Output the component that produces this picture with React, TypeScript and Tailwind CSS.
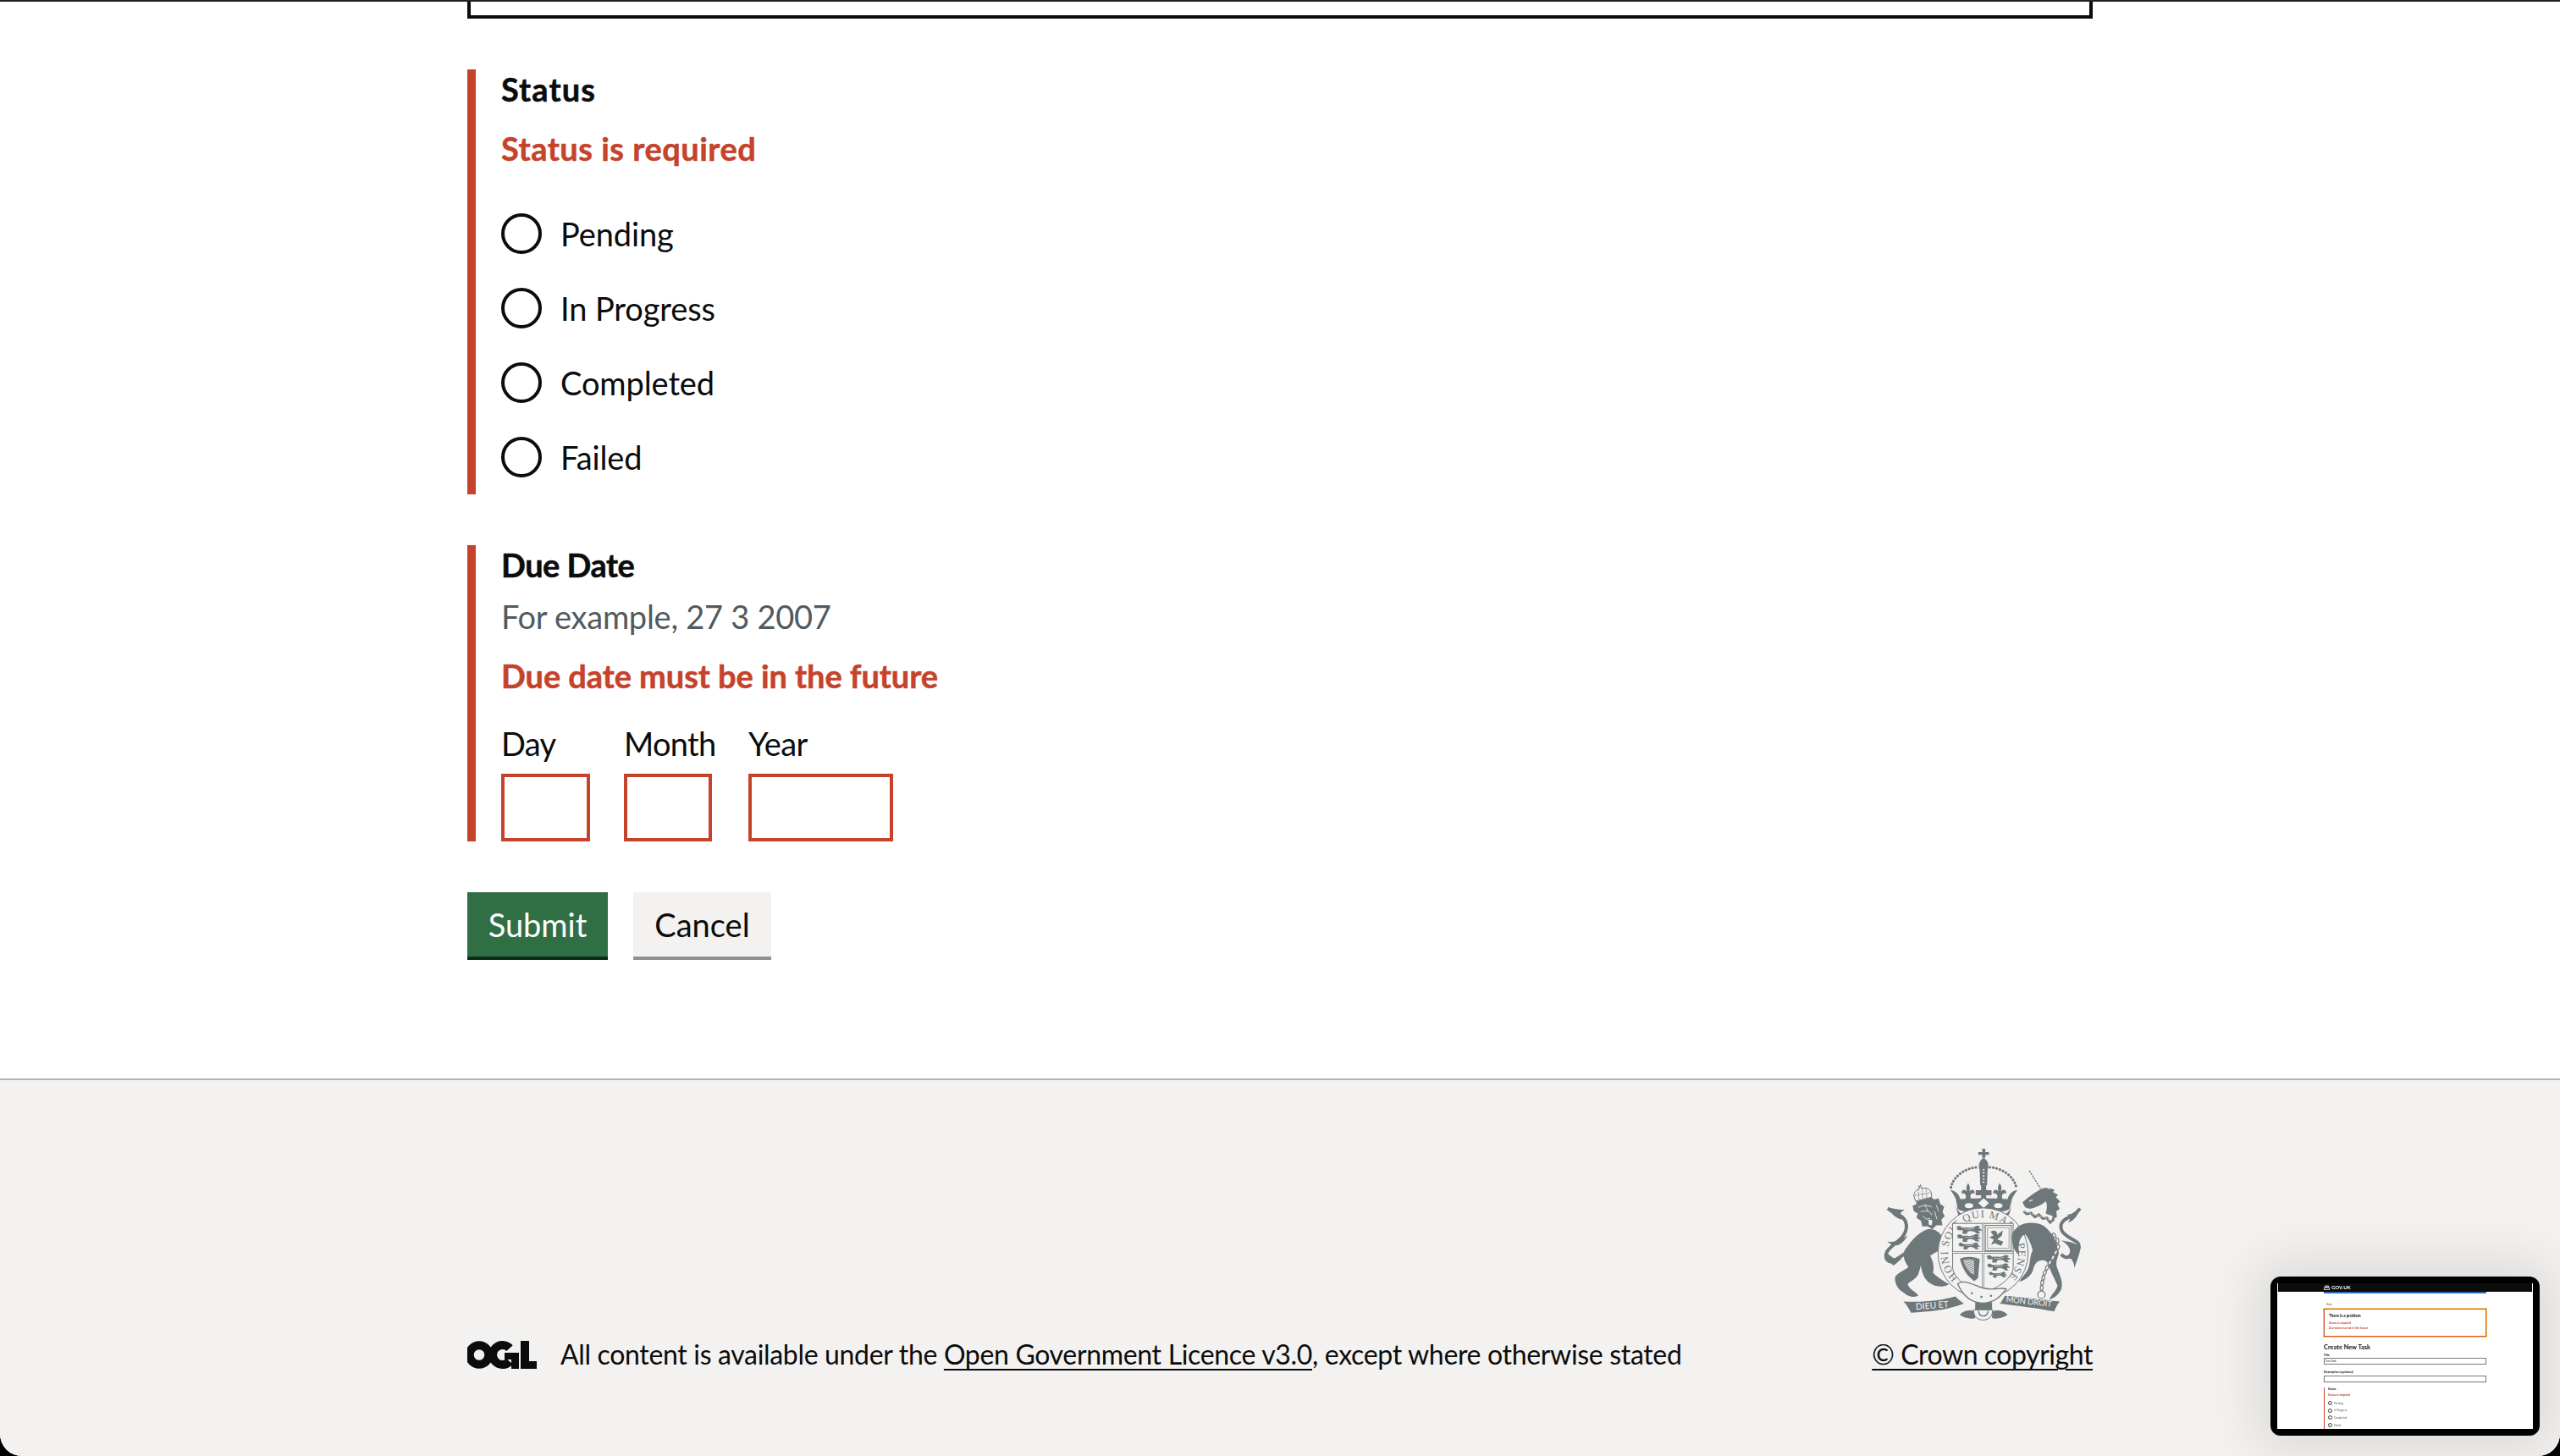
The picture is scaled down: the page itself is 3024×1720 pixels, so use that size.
const STATUS_OPTIONS = ["Pending", "In Progress", "Completed", "Failed"];

function OglLogo() {
  return (
    <svg width="82" height="33" viewBox="0 0 82 33" className="shrink-0" role="img" aria-label="Open Government Licence logo">
      <circle cx="14" cy="16.5" r="11.3" fill="none" stroke="#0b0c0c" strokeWidth="10" />
      <path d="M50,8.7 A11.5,11.5 0 1 0 50,24.3" fill="none" stroke="#0b0c0c" strokeWidth="10" />
      <path d="M44,14 H61 V33 H52 V22 H44 Z" fill="#0b0c0c" />
      <path d="M63,0 H73 V24 H82 V33 H63 Z" fill="#0b0c0c" />
    </svg>
  );
}

function MiniLion({ x, y, s = 1 }: { x: number; y: number; s?: number }) {
  return (
    <g transform={`translate(${x} ${y}) scale(${s})`}>
      <path d="M0,7 C4,1 12,0 16,5 C20,9 28,6 38,7 C46,8 54,6 60,3 C66,0 72,2 76,5 L70,9 C76,10 80,13 81,18 L72,16 C70,20 74,24 78,26 L64,26 C60,20 52,17 42,18 C34,19 32,24 36,27 L20,27 C18,22 22,17 20,14 C14,17 6,16 0,12 L6,10 Z" fill="#6e777a" />
      <path d="M26,11 C36,13 48,13 58,9" stroke="#f3f2f1" strokeWidth="1.6" fill="none" />
    </g>
  );
}

function fleur(cx: number, t: number) {
  return `M${cx},${t} C${cx + 7},${t + 12} ${cx + 8},${t + 20} ${cx + 4},${t + 30} C${cx + 12},${t + 20} ${cx + 25},${t + 22} ${cx + 23},${t + 38} C${cx + 18},${t + 33} ${cx + 12},${t + 36} ${cx + 8},${t + 44} L${cx + 10},${t + 66} H${cx - 10} L${cx - 8},${t + 44} C${cx - 12},${t + 36} ${cx - 18},${t + 33} ${cx - 23},${t + 38} C${cx - 25},${t + 22} ${cx - 12},${t + 20} ${cx - 4},${t + 30} C${cx - 8},${t + 20} ${cx - 7},${t + 12} ${cx},${t} Z`;
}

const CHAIN: [number, number, number][] = [
  [680, 358, 60],
  [692, 376, 80],
  [694, 398, 100],
  [686, 418, 115],
  [676, 436, 120],
  [665, 454, 120],
  [655, 472, 115],
  [647, 490, 110],
  [642, 508, 100],
  [638, 526, 95],
  [636, 544, 90],
];

function Crest() {
  const c = "#6e777a";
  const bg = "#f3f2f1";
  return (
    <svg width="233" height="207" viewBox="75 45 700 620" role="img" aria-label="Royal coat of arms">
      <defs>
        <path id="garterRing" d="M340,508 A125,125 0 1 1 516,508" fill="none" />
        <pattern id="harpHatch" width="5" height="5" patternUnits="userSpaceOnUse" patternTransform="rotate(70)">
          <rect width="2.2" height="5" fill={c} />
        </pattern>
      </defs>

      {/* lion tail */}
      <path d="M165,412 C125,440 95,465 85,440 C75,410 110,395 140,365 C165,335 160,300 130,285 C118,278 105,275 90,262" fill="none" stroke={c} strokeWidth="12" />
      <path d="M90,258 C110,262 128,268 150,266 C134,275 128,285 142,302 C120,298 105,285 90,258 Z M88,378 C105,385 125,378 160,358 C150,378 130,398 112,392 C102,390 94,386 88,378 Z M80,408 C90,440 100,462 112,464 C125,455 130,445 142,440 C110,445 95,430 80,408 Z" fill={c} />

      {/* lion */}
      <path d="M235,335 C200,345 175,375 150,410 C140,430 150,450 163,470 C150,482 125,490 116,505 C113,525 125,550 145,560 C165,578 185,578 198,572 C190,555 170,555 160,530 C170,520 195,510 200,490 L207,465 C212,500 225,525 255,535 C275,541 295,541 307,530 C285,520 265,505 250,490 C256,470 250,445 240,430 L270,412 L300,408 L340,408 C330,385 300,375 285,365 C275,350 265,335 235,335 Z" fill={c} />
      <path d="M178,252 L194,246 L206,232 L222,236 L240,222 L256,230 L270,226 L276,246 L290,256 L284,274 L292,290 L280,302 L284,322 L262,322 L248,336 L232,326 L212,326 L208,306 L192,296 L196,280 L182,272 Z" fill={c} />
      <path d="M198,258 L222,250 L246,256 M222,250 L232,272 M206,274 C214,270 222,272 232,272 C240,274 244,280 246,286 M214,288 L226,300 L240,298 M262,250 L270,272 M256,272 L264,300" stroke={bg} strokeWidth="2.5" fill="none" />
      <path d="M234,304 C238,300 246,302 248,308 L246,322 L236,320 Z" fill={bg} />
      <path d="M188,236 L182,215 C186,197 198,193 204,191 L198,182 L204,185 L206,178 L209,190 C226,188 240,192 244,206 L246,222 Z" fill={bg} stroke={c} strokeWidth="3" />
      <path d="M190,238 L246,222 L248,232 L192,248 Z" fill={c} />
      <path d="M186,216 L242,206 M198,196 L200,232 M212,192 L214,228 M226,192 L228,226" stroke={c} strokeWidth="4" strokeDasharray="3 4" fill="none" />

      {/* crown */}
      <path d="M425,50 H436 V62 H449 V72 H436 V82 H425 V72 H411 V62 H425 Z" fill={c} />
      <path d="M430,82 C446,90 450,110 444,126 L442,180 H418 L416,126 C410,110 414,90 430,82 Z" fill={c} />
      <path d="M430,122 V172" stroke={bg} strokeWidth="6" strokeDasharray="5 6" />
      <path d="M314,188 C322,148 365,118 408,116 M452,116 C495,118 538,148 546,188" fill="none" stroke={c} strokeWidth="9" strokeLinecap="round" strokeDasharray="1 11" />
      <path d={fleur(375, 172)} fill={c} />
      <path d={fleur(487, 172)} fill={c} />
      <path d="M421,178 H439 V197 H458 V215 H439 V240 H421 V215 H402 V197 H421 Z" fill={c} />
      <path d="M312,197 C330,198 346,212 350,240 L335,240 C332,225 322,210 312,197 Z M550,197 C532,198 516,212 512,240 L527,240 C530,225 540,210 550,197 Z" fill={c} />
      <path d="M332,232 C370,224 490,224 530,232 L522,264 C490,284 370,284 338,264 Z" fill={c} />
      <path d="M430,226 L449,243 L430,260 L411,243 Z" fill={bg} />
      <ellipse cx="378" cy="252" rx="15" ry="9" fill={bg} />
      <ellipse cx="482" cy="252" rx="15" ry="9" fill={bg} />
      <path d="M330,252 C340,275 350,280 356,283 L340,285 Z M530,252 C522,275 510,280 504,283 L520,285 Z" fill={c} />

      {/* garter ring */}
      <circle cx="428" cy="420" r="160" fill={bg} stroke={c} strokeWidth="3" />
      <text fontFamily="Liberation Serif, serif" fontSize="38" fill={c}>
        <textPath href="#garterRing" textLength="585">HONI SOIT QUI MAL Y PENSE</textPath>
      </text>

      {/* shield */}
      <path d="M320,315 H535 V470 C535,510 480,545 428,562 C375,545 320,510 320,470 Z" fill={bg} stroke={c} strokeWidth="3" />
      <path d="M428,315 V560 M320,418 H535" stroke={c} strokeWidth="7" />
      <path d="M428,315 V560 M320,418 H535" stroke={bg} strokeWidth="3" />
      <MiniLion x={333} y={322} s={1.12} />
      <MiniLion x={335} y={352} s={1.05} />
      <MiniLion x={340} y={382} s={0.95} />
      <MiniLion x={440} y={426} s={1.05} />
      <MiniLion x={442} y={456} s={1} />
      <MiniLion x={448} y={486} s={0.8} />
      <rect x="436" y="322" width="92" height="90" fill="none" stroke={c} strokeWidth="3" />
      <rect x="444" y="330" width="76" height="74" fill="none" stroke={c} strokeWidth="2" />
      <path d="M455,345 C468,335 480,345 478,355 L498,340 L495,358 L478,372 L500,380 L492,395 L470,385 L456,392 L466,372 L450,365 L465,358 Z" fill={c} />
      <path d="M346,440 C365,432 395,430 416,442 L410,510 L396,520 L380,505 C368,495 352,470 346,440 Z" fill={c} />
      <path d="M358,446 C372,442 385,442 396,446 L396,498 L384,490 C372,478 362,462 358,446 Z" fill={bg} />
      <path d="M358,446 C372,442 385,442 396,446 L396,498 L384,490 C372,478 362,462 358,446 Z" fill="url(#harpHatch)" />

      {/* unicorn tail */}
      <path d="M705,425 C730,450 760,425 768,398 C772,375 735,375 710,345 C698,325 705,305 730,295 C745,288 760,280 772,262" fill="none" stroke={c} strokeWidth="12" />
      <path d="M772,260 C760,275 745,282 724,284 C738,290 740,300 730,312 C750,305 765,288 772,260 Z M705,375 C725,380 750,378 775,400 C770,425 760,450 752,474 C752,452 742,438 725,432 C745,420 740,395 705,375 Z" fill={c} />

      {/* unicorn */}
      <path d="M592,128 L632,192" stroke={c} strokeWidth="4" strokeDasharray="7 3" />
      <path d="M568,240 C585,226 610,205 636,192 C652,186 664,190 672,204 L690,250 L682,292 L650,280 C656,262 656,244 650,236 C640,248 620,256 600,262 C590,264 582,262 576,256 Z" fill={c} />
      <path d="M664,190 L682,196 L676,204 L694,214 L686,222 L702,238 L692,246 L700,264 L688,272 L690,292 L672,304 C682,270 678,235 664,190 Z" fill={c} />
      <path d="M592,236 L604,232" stroke={bg} strokeWidth="3.5" fill="none" />
      <path d="M572,272 L584,282 L598,278 L612,292 L626,284 L640,298 L654,296 L666,312 L680,300" fill="none" stroke={c} strokeWidth="9" />
      <path d="M574,272 L640,293 L672,306" fill="none" stroke={bg} strokeWidth="2.5" strokeDasharray="5 5" />
      <path d="M552,326 C575,312 610,308 640,322 C668,340 692,378 697,420 C692,440 684,452 690,470 C702,505 712,520 706,548 C695,570 680,580 662,586 C672,565 690,552 692,535 C680,510 668,485 655,452 C635,438 612,450 606,478 C600,500 580,515 556,522 C570,500 585,488 590,470 C596,448 594,428 604,412 C600,390 590,368 578,354 C560,358 550,385 556,428 C538,415 526,385 532,350 C538,340 545,335 552,326 Z" fill={c} />
      <g fill={bg} stroke={c} strokeWidth="3.5">
        {CHAIN.map(([x, y, r]) => (
          <ellipse key={y} cx={x} cy={y} rx="9" ry="5" transform={`rotate(${r} ${x} ${y})`} />
        ))}
        <circle cx="635" cy="568" r="13" />
      </g>

      {/* motto and base */}
      <path d="M345,640 C360,620 390,622 400,628 V652 C380,656 360,650 345,640 Z M515,640 C500,620 470,622 460,628 V652 C480,656 500,650 515,640 Z" fill={c} />
      <path d="M400,595 H460 V622 H400 Z" fill={c} />
      <path d="M394,622 H462 C462,645 448,658 428,658 C408,658 394,645 394,622 Z" fill={bg} stroke={c} strokeWidth="3" />
      <path d="M412,626 C415,650 442,650 446,626" fill="none" stroke={c} strokeWidth="4" />
      <path d="M338,530 C360,510 400,538 430,545 C470,555 490,540 510,548 C490,575 470,595 430,598 C395,598 360,580 338,530 Z" fill={bg} stroke={c} strokeWidth="4" />
      <circle cx="388" cy="563" r="4" fill={c} />
      <circle cx="422" cy="576" r="4" fill={c} />
      <circle cx="456" cy="572" r="4" fill={c} />
      <path d="M145,592 C210,596 275,590 330,574 C345,590 352,592 360,600 C305,622 245,628 172,632 C165,618 158,604 145,592 Z" fill={c} />
      <path d="M505,572 C570,578 640,586 700,592 C690,605 685,615 680,628 C620,616 550,608 488,600 C495,590 500,582 505,572 Z" fill={c} />
      <text transform="translate(190 622) rotate(-5)" fontFamily="Lato, sans-serif" fontSize="31" fill={bg}>DIEU ET</text>
      <text transform="translate(508 594) rotate(6)" fontFamily="Lato, sans-serif" fontSize="29" fill={bg} letterSpacing="-0.5">MON DROIT</text>
    </svg>
  );
}

function Radio({ label }: { label: string }) {
  return (
    <div className="flex items-center h-[80px] mb-[8px] last:mb-0">
      <span className="w-[48px] h-[48px] rounded-full border-4 border-[#0b0c0c] bg-white shrink-0" />
      <span className="ml-[22px] pb-[1px] tracking-[-0.1px]">{label}</span>
    </div>
  );
}

function DateField({ label, width, itemWidth }: { label: string; width: string; itemWidth: string }) {
  return (
    <div className={itemWidth}>
      <div className="h-[50px] leading-[48px] tracking-[-0.7px]">{label}</div>
      <div className={`mt-[10px] h-[80px] border-4 border-[#c5432b] bg-white ${width}`} />
    </div>
  );
}

function Thumbnail() {
  return (
    <div className="absolute right-[24px] bottom-[24px] w-[318px] h-[188px] rounded-[12px] bg-black p-[8px] shadow-[0_0_60px_20px_rgba(0,0,0,0.09)]">
      <div className="w-full h-full bg-white overflow-hidden blur-[0.4px] font-[family-name:Lato,sans-serif] text-[#0b0c0c]">
        <div className="h-[10px] mx-[1px] bg-[#0b0c0c] pl-[54px] flex items-center gap-[1px] text-white text-[6px] font-bold leading-none">
          <svg width="7" height="6" viewBox="0 0 14 12"><path d="M1 6h12v5H1zM3 2h8v3H3z" fill="none" stroke="#fff" strokeWidth="1.6" /></svg>
          <span className="ml-[1px]">GOV.UK</span>
        </div>
        <div className="ml-[55px] w-[192px]">
          <div className="h-[2px] bg-[#2f6cb5]" />
          <div className="mt-[11px] h-[5px] text-[3px] leading-[5px] text-[#505a5f] pl-[2px]">‹ Back</div>
          <div className="mt-[2px] h-[33px] border border-[#d8562a] outline outline-[#f6c65b] pl-[5px] pt-[4px]">
            <div className="text-[4.6px] font-bold leading-[6px]">There is a problem</div>
            <div className="mt-[3px] text-[3.4px] font-bold leading-[6px] text-[#c5432b]">Status is required</div>
            <div className="text-[3.4px] font-bold leading-[6px] text-[#c5432b]">Due date must be in the future</div>
          </div>
          <div className="mt-[8px] text-[7.4px] font-bold leading-[10px]">Create New Task</div>
          <div className="mt-[2px] text-[3.4px] font-bold leading-[5px]">Title</div>
          <div className="h-[8px] border border-[#777] text-[3.2px] leading-[6px] pl-[1px]">Test Task</div>
          <div className="mt-[6px] text-[3.6px] font-bold leading-[6px]">Description (optional)</div>
          <div className="mt-[1px] h-[8px] border border-[#777]" />
          <div className="mt-[6px] border-l border-[#c5432b] pl-[4px] h-[60px]">
            <div className="text-[3.4px] font-bold leading-[5px]">Status</div>
            <div className="mt-[2px] text-[3.4px] font-bold leading-[5px] text-[#c5432b]">Status is required</div>
            {STATUS_OPTIONS.map((t, i) => (
              <div key={t} className={`flex items-center h-[7px] gap-[2px] text-[3.2px] text-[#505a5f] ${i === 0 ? "mt-[3px]" : "mt-[1.7px]"}`}>
                <span className="w-[5px] h-[5px] rounded-full border-[0.6px] border-[#333]" />
                {t}
              </div>
            ))}
          </div>
        </div>
      </div>
    </div>
  );
}

export default function App() {
  return (
    <div className="w-[3024px] h-[1720px] bg-black overflow-hidden font-[family-name:Lato,sans-serif] text-[38px] leading-[50px] text-[#0b0c0c]">
      <div className="relative h-full rounded-b-[26px] overflow-hidden bg-white border-t-2 border-[#222]">
        <main className="w-[1920px] mx-auto h-[1272px]">
          <div className="h-[20px] border-x-4 border-b-4 border-[#0b0c0c]" />

          <section className="mt-[60px] border-l-[10px] border-[#c5432b] pl-[30px] h-[502px]">
            <div className="h-[50px] leading-[47px] font-bold tracking-[1.1px] [-webkit-text-stroke:0.5px]">Status</div>
            <div className="mt-[20px] h-[50px] leading-[47px] font-bold tracking-[0.5px] text-[#c5432b] [-webkit-text-stroke:0.5px]">Status is required</div>
            <div className="mt-[34px]">
              {STATUS_OPTIONS.map((s) => (
                <Radio key={s} label={s} />
              ))}
            </div>
          </section>

          <section className="mt-[60px] border-l-[10px] border-[#c5432b] pl-[30px] h-[350px]">
            <div className="h-[50px] leading-[47px] font-bold tracking-[-0.5px] [-webkit-text-stroke:0.5px]">Due Date</div>
            <div className="mt-[11px] h-[50px] leading-[47px] tracking-[-0.27px] text-[#505a5f]">For example, 27 3 2007</div>
            <div className="mt-[20px] h-[50px] leading-[47px] font-bold tracking-[-0.07px] text-[#c5432b] [-webkit-text-stroke:0.5px]">Due date must be in the future</div>
            <div className="mt-[29px] flex gap-[40px]">
              <DateField label="Day" width="w-[105px]" itemWidth="w-[105px]" />
              <DateField label="Month" width="w-[104px]" itemWidth="w-[107px]" />
              <DateField label="Year" width="w-[171px]" itemWidth="w-[171px]" />
            </div>
          </section>

          <div className="mt-[60px] flex gap-[30px]">
            <button className="w-[166px] h-[80px] bg-[#306f44] border-b-4 border-[#0e2c17] text-white">Submit</button>
            <button className="w-[163px] h-[80px] bg-[#f3f2f1] border-b-4 border-[#929191] text-[#0b0c0c]">Cancel</button>
          </div>
        </main>

        <footer className="h-[446px] bg-[#f3f2f1] border-t-2 border-[#b1b4b6] pb-[100px] flex items-end">
          <div className="w-[1920px] mx-auto flex items-end justify-between text-[32px] leading-[40px]">
            <div className="flex items-center">
              <OglLogo />
              <p className="ml-[28px] tracking-[-0.33px]">
                All content is available under the{" "}
                <a className="underline decoration-2 underline-offset-[5px]">Open Government Licence v3.0</a>, except where otherwise stated
              </p>
            </div>
            <div className="flex flex-col items-center">
              <Crest />
              <a className="mt-[18px] underline decoration-2 underline-offset-[5px] tracking-[-0.45px]">© Crown copyright</a>
            </div>
          </div>
        </footer>

        <Thumbnail />
      </div>
    </div>
  );
}
